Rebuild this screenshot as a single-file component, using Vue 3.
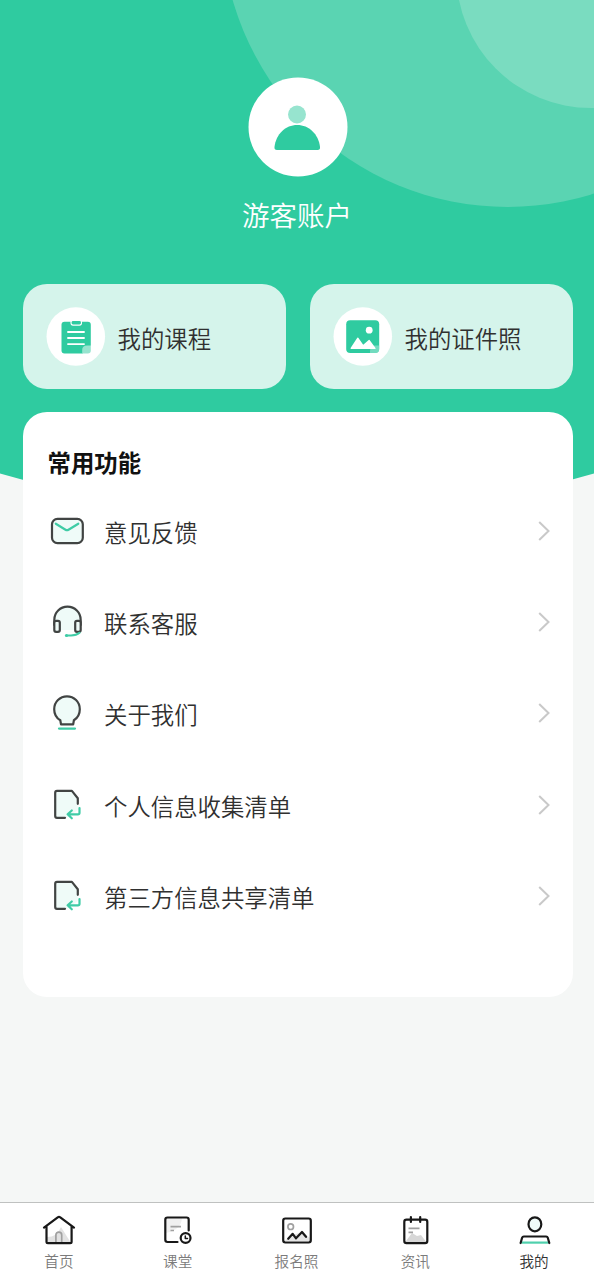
<script setup>
const shortcuts = [
  { icon: 'course', label: '我的课程' },
  { icon: 'photo', label: '我的证件照' },
]

const functions = [
  { icon: 'mail', label: '意见反馈' },
  { icon: 'headset', label: '联系客服' },
  { icon: 'bulb', label: '关于我们' },
  { icon: 'document', label: '个人信息收集清单' },
  { icon: 'document', label: '第三方信息共享清单' },
]

const tabs = [
  { icon: 'home', label: '首页' },
  { icon: 'class', label: '课堂' },
  { icon: 'picture', label: '报名照' },
  { icon: 'news', label: '资讯' },
  { icon: 'me', label: '我的', active: true },
]
</script>

<template>
  <div class="page">
    <svg class="backdrop" viewBox="0 0 594 540" aria-hidden="true">
      <path d="M0 0H594V473.5Q297 562 0 473.5Z" fill="#2fcba0" />
      <circle cx="507.5" cy="-79" r="286" fill="#5ad4b2" />
      <circle cx="591" cy="-26.7" r="134.7" fill="#7adcc0" />
    </svg>

    <header class="profile">
      <svg class="avatar" viewBox="0 0 100 100">
        <circle cx="50" cy="50" r="49.5" fill="#fff" />
        <circle cx="49" cy="37.5" r="9" fill="#97e4cf" />
        <path d="M29 73C27 73 26.3 72 26.500 70C28 57 37.500 48 49.200 48S70.500 57 72 70C72.200 72 71.500 73 69.500 73Z" fill="#2fcba0" />
      </svg>
      <h1 class="name">游客账户</h1>
    </header>

    <section class="shortcuts">
      <div v-for="s in shortcuts" :key="s.label" class="shortcut">
        <svg class="shortcut-icon" viewBox="0 0 60 60">
          <circle cx="29.800" cy="29.500" r="29.300" fill="#fff" />
          <template v-if="s.icon === 'course'">
            <path d="M18.500 14.700H41.800Q44.800 14.700 44.800 17.700V38.500L36.500 46.500H18.500Q15.500 46.500 15.500 43.500V17.700Q15.500 14.700 18.500 14.700Z" fill="#2fcba0" />
            <path d="M44.800 38.500V43.500Q44.800 46.500 41.800 46.500H36.200V43Q36.200 38.500 41 38.500Z" fill="#97e4cf" />
            <rect x="25" y="13.400" width="10.500" height="4.700" rx="2" fill="#2fcba0" stroke="#fff" stroke-width="1.100" />
            <path d="M22 25H38M22 31H38M22 37.100H38" stroke="#fff" stroke-width="1.900" stroke-linecap="round" />
          </template>
          <template v-else>
            <rect x="13.200" y="13.200" width="33" height="32.700" rx="4" fill="#2fcba0" />
            <path d="M37 45.900V44Q37 38.500 42.500 38.500H46.200V41.900Q46.200 45.900 42.200 45.900Z" fill="#97e4cf" opacity=".65" />
            <circle cx="36.200" cy="23.200" r="3.400" fill="#fff" />
            <path d="M18 41.900Q17.200 41.900 17.600 41.100L24.300 30.800Q24.800 30.100 25.300 30.800L30.200 37.700L35.700 32.900Q36.200 32.400 36.600 33L42.500 41Q42.900 41.900 42.200 41.900Z" fill="#fff" />
          </template>
        </svg>
        <span class="shortcut-label">{{ s.label }}</span>
      </div>
    </section>

    <section class="panel">
      <h2 class="panel-title">常用功能</h2>
      <div v-for="f in functions" :key="f.label" class="row">
        <svg class="row-icon" viewBox="0 0 44 44">
          <template v-if="f.icon === 'mail'">
            <rect x="7" y="9.800" width="30.800" height="24.400" rx="5.500" class="line tint" />
            <path d="M10.800 14.700L20.500 20.700Q22 21.600 23.500 20.700L33.300 14.700" class="accent" />
          </template>
          <template v-else-if="f.icon === 'headset'">
            <path d="M9.300 23V19.900A13.200 13.200 0 0 1 35.700 19.900V23V30H9.300Z" fill="#effbf8" />
            <path d="M9.300 25V19.900A13.200 13.200 0 0 1 35.700 19.900V25" class="line" />
            <rect x="9.300" y="20.800" width="5.500" height="11" rx="1.800" class="line tint" />
            <rect x="30.200" y="20.800" width="5.500" height="11" rx="1.800" class="line tint" />
            <path d="M21.500 35.500H26Q31.500 35.500 34.500 32.800" class="accent" />
            <circle cx="21.500" cy="35.500" r="1.600" fill="#3fcca6" />
          </template>
          <template v-else-if="f.icon === 'bulb'">
            <path d="M16 33.300L15.300 29.300C11.500 27 9.200 23 9.200 18.200A12.800 12.900 0 0 1 34.800 18.200C34.800 23 32.500 27 28.900 29.300L28.200 33.300Z" class="line tint" />
            <path d="M14 37.600H30" class="accent" />
          </template>
          <template v-else>
            <path d="M10.200 7.900H26.700L32.800 15V27L22 34.800H10.200Z" fill="#effbf8" />
            <path d="M32.800 20.800V15.200L26.900 7.900H12Q10.200 7.900 10.200 9.700V33Q10.200 34.800 12 34.800H20" class="line" />
            <path d="M34.500 25V29.700Q34.500 31.300 32.900 31.300H22.800M26.800 27.500L22.600 31.300L26.800 35.300" class="accent" />
          </template>
        </svg>
        <span class="row-label">{{ f.label }}</span>
        <svg class="chevron" viewBox="0 0 12 20"><path d="M1.200 1L10.500 10L1.200 19" /></svg>
      </div>
    </section>

    <nav class="tabbar">
      <div v-for="t in tabs" :key="t.label" class="tab" :class="{ active: t.active }">
        <svg class="tab-icon" viewBox="0 0 36 36">
          <template v-if="t.icon === 'home'">
            <path d="M6 31V25Q16 25 20 15L30 31Z" fill="#e2e2e2" />
            <path d="M14.900 31V23A2.900 2.900 0 0 1 20.700 23V31" class="soft" />
            <path d="M5.500 14.300V29.800Q5.500 31.200 6.900 31.200H29.200Q30.600 31.200 30.600 29.800V14.300M3 15.700L16.700 5.300Q18 4.400 19.300 5.300L33 15.700" class="ink" />
          </template>
          <template v-else-if="t.icon === 'class'">
            <path d="M6 6H22Q21 18 6 21Z" fill="#f0f0f0" />
            <path d="M17.500 30H7.500Q5.300 30 5.300 27.800V7.700Q5.300 5.500 7.500 5.500H26.500Q28.700 5.500 28.700 7.700V18.500" class="ink" />
            <path d="M10.500 14.700H21M10.500 18.500H14" class="soft" />
            <circle cx="25.600" cy="26" r="4.900" class="ink" />
            <path d="M25.300 24V26.500H27.500" class="ink thin" />
          </template>
          <template v-else-if="t.icon === 'picture'">
            <path d="M5 29L14 23L23 20L31 26V29Z" fill="#e5e5e5" />
            <rect x="4.200" y="6.500" width="27.600" height="24" rx="2.200" class="ink" />
            <circle cx="11.700" cy="14.700" r="2.800" class="soft" />
            <path d="M9.200 26.800L13.700 21.800L17 26.300L23 20L27 24.800" class="ink" />
          </template>
          <template v-else-if="t.icon === 'news'">
            <path d="M6.500 31L14 21L19 24L23 23L29 31Z" fill="#d7d7d7" />
            <rect x="6.300" y="7.700" width="23" height="23.500" rx="2.200" class="ink" />
            <path d="M12.900 5V10M22.200 5V10" class="ink" />
            <path d="M10.500 16.300H21.500M10.500 20.300H15" class="soft" />
          </template>
          <template v-else>
            <ellipse cx="17.900" cy="12.300" rx="6.400" ry="7" class="ink pale" />
            <path d="M4.500 30.600H31.500" stroke="#4fd0ad" stroke-width="2.200" />
            <path d="M3.600 31L5.100 25.800Q5.500 24.500 6.800 24.500H29.100Q30.400 24.500 30.800 25.800L32.300 31" class="ink" />
          </template>
        </svg>
        <span class="tab-label">{{ t.label }}</span>
      </div>
    </nav>
  </div>
</template>

<style>
body {
  background: #f5f7f6;
}
</style>

<style scoped>
.page {
  position: relative;
  box-sizing: border-box;
  height: 1280px;
  overflow: hidden;
  display: flex;
  flex-direction: column;
  background: #f5f7f6;
  color: #303030;
  font-family: "Noto Sans CJK SC", sans-serif;
  font-weight: 350;
}
.backdrop {
  position: absolute;
  top: 0;
  left: 0;
  width: 594px;
  height: 540px;
}
.profile,
.shortcuts,
.panel,
.tabbar {
  position: relative;
}
.profile {
  height: 284px;
  box-sizing: border-box;
  padding-top: 77px;
  display: flex;
  flex-direction: column;
  align-items: center;
}
.avatar {
  width: 100px;
  height: 100px;
  margin-left: 2px;
}
.name {
  margin: 17px 0 0;
  font-size: 27.500px;
  line-height: 40px;
  font-weight: 350;
  color: #fff;
}
.shortcuts {
  display: grid;
  grid-template-columns: 1fr 1fr;
  gap: 24px;
  padding: 0 21px 0 23px;
}
.shortcut {
  height: 105px;
  box-sizing: border-box;
  padding-left: 23px;
  display: flex;
  align-items: center;
  border-radius: 24px;
  background: #d5f4eb;
}
.shortcut-icon {
  width: 60px;
  height: 60px;
}
.shortcut-label {
  margin: 2px 0 0 11.500px;
  font-size: 23.400px;
  line-height: 34px;
}
.panel {
  height: 585px;
  box-sizing: border-box;
  margin: 23px 21px 0 23px;
  padding: 33px 23px 0 22px;
  border-radius: 24px;
  background: #fff;
}
.panel-title {
  margin: 0 0 6px 2.500px;
  font-size: 23.400px;
  line-height: 34px;
  height: 34px;
  font-weight: 700;
  color: #111;
}
.row {
  height: 91.400px;
  display: flex;
  align-items: center;
}
.row-icon {
  width: 44px;
  height: 44px;
  margin-left: -0.500px;
}
.row-label {
  flex: 1;
  margin: 2px 0 0 15.500px;
  font-size: 23.400px;
  line-height: 34px;
}
.line {
  fill: none;
  stroke: #414443;
  stroke-width: 2.200;
  stroke-linecap: round;
  stroke-linejoin: round;
}
.line.tint {
  fill: #effbf8;
}
.accent {
  fill: none;
  stroke: #3fcca6;
  stroke-width: 2.200;
  stroke-linecap: round;
  stroke-linejoin: round;
}
.chevron {
  width: 12px;
  height: 20px;
}
.chevron path {
  fill: none;
  stroke: #c9c9c9;
  stroke-width: 2;
}
.tabbar {
  margin-top: auto;
  height: 78px;
  box-sizing: border-box;
  border-top: 1px solid #bfc1c0;
  padding-top: 9px;
  display: grid;
  grid-template-columns: repeat(5, 1fr);
  background: #fff;
}
.tab {
  display: flex;
  flex-direction: column;
  align-items: center;
  font-size: 14.600px;
  line-height: 22px;
  color: #7b7b7b;
}
.tab.active {
  color: #303030;
}
.tab-icon {
  width: 36px;
  height: 36px;
  margin-bottom: 2px;
}
.tab-label {
  margin-right: 1px;
}
.ink {
  fill: none;
  stroke: #181818;
  stroke-width: 2.200;
  stroke-linecap: round;
  stroke-linejoin: round;
}
.ink.pale {
  fill: #effbf8;
}
.ink.thin {
  stroke-width: 1.500;
}
.soft {
  fill: none;
  stroke: #a0a0a0;
  stroke-width: 1.700;
}
</style>
